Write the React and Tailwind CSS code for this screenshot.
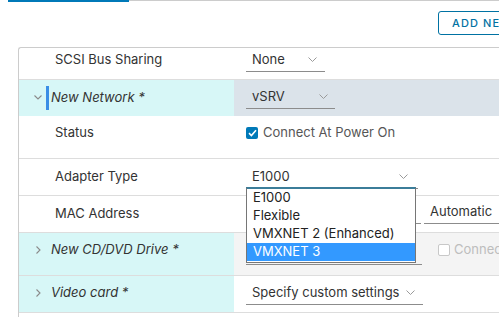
import React from "react";

const Chev = () => (
  <svg width="9" height="5" viewBox="0 0 9 5" className="shrink-0">
    <path d="M0.5 0.5 L4.5 4.5 L8.5 0.5" fill="none" stroke="#9a9a9a" strokeWidth="1" />
  </svg>
);

const ChevDown = () => (
  <svg width="8" height="5" viewBox="0 0 8 5">
    <path d="M0.5 0.5 L4 4 L7.5 0.5" fill="none" stroke="#8a8a8a" strokeWidth="1.1" />
  </svg>
);

const ChevRight = () => (
  <svg width="5" height="8" viewBox="0 0 5 8">
    <path d="M0.5 0.5 L4 4 L0.5 7.5" fill="none" stroke="#8a8a8a" strokeWidth="1.1" />
  </svg>
);

function Select({ text, w, chevPad = "pr-[8px]", h = "h-[24px]" }) {
  return (
    <div className={`flex items-center justify-between border-b border-[#8c8c8c] pl-[6px] ${w} ${h} ${chevPad} shrink-0`}>
      <span className="text-[13px] text-[#333] whitespace-nowrap">{text}</span>
      <Chev />
    </div>
  );
}

export default function App() {
  return (
    <div
      className="w-[499px] h-[317px] overflow-hidden bg-white relative"
      style={{ fontFamily: "Inter, 'Noto Sans', sans-serif" }}
    >
      {/* top tab line */}
      <div className="flex items-start h-[2px]">
        <div className="ml-[8px] w-[121px] h-[2px] bg-[#0079b8]" />
        <div className="flex-1 h-px bg-[#cccccc]" />
      </div>

      {/* button */}
      <div className="flex pl-[438px] pt-[9px] h-[45px] overflow-hidden">
        <div className="shrink-0 h-[24px] border border-[#0072a3] rounded-[3px] px-[13px] flex items-center text-[11px] tracking-[1.1px] font-medium text-[#0072a3] whitespace-nowrap">
          ADD NEW DEVICE
        </div>
      </div>

      {/* table */}
      <div className="ml-[18px] w-[560px] border-l border-t border-[#cccccc] rounded-tl-[3px] text-[13px] text-[#333]">
        {/* SCSI */}
        <div className="flex h-[32px] border-b border-[#dddddd]">
          <div className="w-[215px] shrink-0 pl-[36px] h-[24px] flex items-center">SCSI Bus Sharing</div>
          <div className="flex-1 pl-[12px]">
            <Select text="None" w="w-[79px]" chevPad="pr-[8px]" />
          </div>
        </div>

        {/* New Network */}
        <div className="flex h-[36px]">
          <div className="w-[215px] shrink-0 bg-[#d7f7f7] flex">
            <div className="w-[27px] flex items-center justify-end pr-[4px] pb-[1px]">
              <ChevDown />
            </div>
            <div className="flex items-center h-full">
              <div className="w-[3px] h-[24px] bg-[#3a8ee6]" />
              <span className="italic pl-[2px]">New Network *</span>
            </div>
          </div>
          <div className="flex-1 bg-[#dbe3ea] pl-[12px] pt-[5px]">
            <Select text="vSRV" w="w-[89px]" chevPad="pr-[7px]" />
          </div>
        </div>

        {/* Status */}
        <div className="flex h-[43px] border-b border-[#dddddd]">
          <div className="w-[215px] shrink-0 pl-[36px] pt-[5px]">
            <div className="h-[24px] flex items-center">Status</div>
          </div>
          <div className="flex-1 pl-[12px] pt-[5px]">
            <div className="h-[24px] flex items-center gap-[5px]">
              <div className="w-[12px] h-[12px] rounded-[2px] bg-[#0079b8] flex items-center justify-center">
                <svg width="9" height="8" viewBox="0 0 9 8">
                  <path d="M1 4.2 L3.4 6.5 L8 1.2" fill="none" stroke="white" strokeWidth="1.6" />
                </svg>
              </div>
              <span className="text-[#565656]">Connect At Power On</span>
            </div>
          </div>
        </div>

        {/* Adapter Type */}
        <div className="flex h-[37px] border-b border-[#dddddd]">
          <div className="w-[215px] shrink-0 pl-[36px] pt-[6px]">
            <div className="h-[24px] flex items-center">Adapter Type</div>
          </div>
          <div className="flex-1 pl-[12px] pt-[6px]">
            <Select text="E1000" w="w-[172px]" chevPad="pr-[10px]" />
          </div>
        </div>

        {/* MAC Address */}
        <div className="flex h-[37px] border-b border-[#dddddd]">
          <div className="w-[215px] shrink-0 pl-[36px] pt-[6px]">
            <div className="h-[24px] flex items-center">MAC Address</div>
          </div>
          <div className="flex-1 pl-[12px] pt-[4px] flex items-start gap-[3px]">
            <Select text="" w="w-[175px]" />
            <Select text="Automatic" w="w-[100px]" />
          </div>
        </div>

        {/* CD/DVD */}
        <div className="flex h-[43px] border-b border-[#dddddd]">
          <div className="w-[215px] shrink-0 bg-[#d7f7f7] flex pt-[5px]">
            <div className="w-[27px] h-[24px] flex items-center justify-end pr-[5px]">
              <ChevRight />
            </div>
            <div className="h-[24px] flex items-center pl-[5px]">
              <span className="italic">New CD/DVD Drive *</span>
            </div>
          </div>
          <div className="flex-1 bg-[#f4f4f4] pl-[12px] pt-[5px] flex items-start gap-[16px]">
            <Select text="" w="w-[176px]" h="h-[27px]" />
            <div className="h-[24px] flex items-center gap-[4px] shrink-0">
              <div className="w-[12px] h-[12px] rounded-[2px] border border-[#c8c8c8] bg-white" />
              <span className="text-[#bdbdbd] whitespace-nowrap">Connect At Power On</span>
            </div>
          </div>
        </div>

        {/* Video card */}
        <div className="flex h-[37px] border-b border-[#dddddd]">
          <div className="w-[215px] shrink-0 bg-[#d7f7f7] flex pt-[5px]">
            <div className="w-[27px] h-[24px] flex items-center justify-end pr-[5px]">
              <ChevRight />
            </div>
            <div className="h-[24px] flex items-center pl-[5px]">
              <span className="italic">Video card *</span>
            </div>
          </div>
          <div className="flex-1 pl-[12px] pt-[5px]">
            <Select text="Specify custom settings" w="w-[177px]" chevPad="pr-[8px]" />
          </div>
        </div>
        <div className="h-[10px]" />
      </div>

      {/* open dropdown list */}
      <div className="absolute left-[246px] top-[187px] w-[170px] h-[76px] bg-white border-x border-b border-t-2 border-x-[#767676] border-b-[#767676] border-t-[#3b7d99] text-[13px] text-[#222]">
        <div className="h-[18px] flex items-center pl-[6px]">E1000</div>
        <div className="h-[18px] flex items-center pl-[6px]">Flexible</div>
        <div className="h-[18px] flex items-center pl-[6px]">VMXNET 2 (Enhanced)</div>
        <div className="h-[18px] flex items-center pl-[6px] bg-[#3399ff] text-white">VMXNET 3</div>
      </div>
    </div>
  );
}
